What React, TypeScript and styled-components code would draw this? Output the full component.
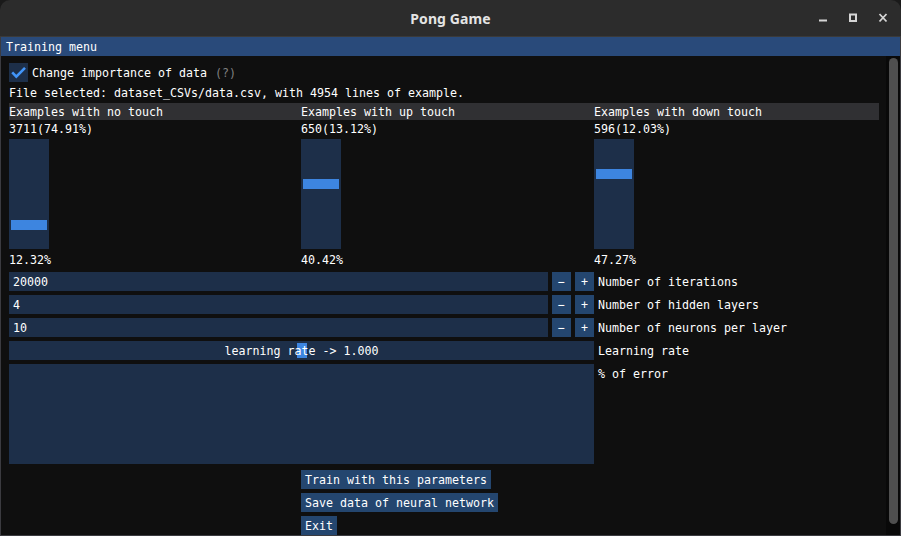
import React from 'react';
import styled, { createGlobalStyle } from 'styled-components';

const GlobalStyle = createGlobalStyle`
  html, body {
    margin: 0;
    padding: 0;
    background: #1a1a1a;
  }
  body {
    width: 901px;
    height: 536px;
    overflow: hidden;
  }
`;

const Frame = styled.div`
  width: 901px;
  height: 536px;
  display: flex;
  flex-direction: column;
  overflow: hidden;
  font-family: "DejaVu Sans Mono", "Liberation Mono", monospace;
  font-size: 11.63px;
  line-height: 15px;
  color: #ffffff;
`;

const TitleBar = styled.div`
  height: 36px;
  flex-shrink: 0;
  display: grid;
  grid-template-columns: 1fr auto 1fr;
  align-items: center;
  background: #2c2c2c;
  border-radius: 10px 10px 0 0;
  border-bottom: 1px solid #3a3a3a;
  line-height: normal;
`;

const Title = styled.div`
  grid-column: 2;
  font-family: "Noto Sans", "DejaVu Sans", sans-serif;
  font-weight: 700;
  font-size: 14px;
  color: #e4e4e4;
  letter-spacing: 0.1px;
`;

const Controls = styled.div`
  grid-column: 3;
  justify-self: end;
  display: flex;
  padding-right: 3px;
  height: 36px;
`;

const ControlButton = styled.div`
  width: 30px;
  height: 36px;
  display: flex;
  justify-content: center;
  padding-top: 13px;
  box-sizing: border-box;
`;

const Window = styled.div`
  flex: 1;
  display: flex;
  flex-direction: column;
  background: #0f0f0f;
  border: 1px solid #3b3b40;
  border-top: none;
  min-height: 0;
`;

const MenuBar = styled.div`
  height: 19px;
  flex-shrink: 0;
  background: #294a7a;
  padding: 3px 5px 0;
  box-sizing: border-box;
`;

const Body = styled.div`
  flex: 1;
  display: flex;
  min-height: 0;
`;

const Content = styled.div`
  flex: 1;
  display: flex;
  flex-direction: column;
  gap: 4px;
  padding: 7px 7px 0 8px;
`;

const ScrollTrack = styled.div`
  width: 14px;
  flex-shrink: 0;
  background: #090909;
  padding: 2px 2px 0 3px;
  box-sizing: border-box;
`;

const ScrollGrab = styled.div`
  width: 9px;
  height: 466px;
  border-radius: 5px;
  background: #4f4f4f;
`;

const CheckRow = styled.div`
  display: flex;
  align-items: flex-start;
  height: 19px;
`;

const CheckBox = styled.div`
  width: 19px;
  height: 19px;
  background: #1d2f49;
  margin-right: 4px;
`;

const CheckLabel = styled.span`
  padding-top: 3px;
  white-space: pre;
`;

const Hint = styled.span`
  color: #808080;
  margin-left: 8px;
`;

const Line = styled.div`
  height: 13px;
  white-space: pre;
`;

const Table = styled.div`
  width: 870px;
  display: flex;
  flex-direction: column;
`;

const TableHeader = styled.div`
  display: grid;
  grid-template-columns: 292px 293px 1fr;
  height: 17px;
  padding-top: 2px;
  box-sizing: border-box;
  background: #303033;
`;

const TableRow = styled.div`
  display: grid;
  grid-template-columns: 292px 293px 1fr;
  margin-top: 2px;
`;

const Cell = styled.div`
  display: flex;
  flex-direction: column;
  gap: 4px;
`;

const VSlider = styled.div`
  position: relative;
  width: 40px;
  height: 110px;
  background: #1d2f49;
`;

const VGrab = styled.div<{ $top: number }>`
  position: absolute;
  left: 2px;
  right: 2px;
  top: ${({ $top }) => $top}px;
  height: 10px;
  background: #3d85e0;
`;

const ParamRow = styled.div<{ $gap?: number }>`
  display: flex;
  align-items: flex-start;
  gap: 4px;
  margin-top: ${({ $gap }) => $gap ?? 0}px;
`;

const InputField = styled.div`
  width: 539px;
  height: 19px;
  padding: 3px 4px;
  box-sizing: border-box;
  background: #1d2f49;
`;

const StepButton = styled.div`
  width: 19px;
  height: 19px;
  padding-top: 3px;
  box-sizing: border-box;
  text-align: center;
  background: #24466f;
`;

const Label = styled.div`
  padding-top: 3px;
  white-space: pre;
`;

const HSlider = styled.div`
  position: relative;
  width: 585px;
  height: 19px;
  padding-top: 3px;
  box-sizing: border-box;
  background: #1d2f49;
  text-align: center;
`;

const HGrab = styled.div`
  position: absolute;
  top: 2px;
  bottom: 2px;
  width: 10px;
  background: #3d85e0;
`;

const SliderText = styled.span`
  position: relative;
`;

const Plot = styled.div`
  width: 585px;
  height: 100px;
  background: #1d2f49;
`;

const ButtonStack = styled.div`
  display: flex;
  flex-direction: column;
  align-items: flex-start;
  gap: 4px;
  padding-left: 292px;
  margin-top: 2px;
`;

const Button = styled.div`
  height: 19px;
  padding: 3px 4px 0;
  box-sizing: border-box;
  background: #24466f;
  white-space: pre;
`;

const columns = [
  { title: 'Examples with no touch', count: '3711(74.91%)', pct: '12.32%', top: 81 },
  { title: 'Examples with up touch', count: '650(13.12%)', pct: '40.42%', top: 40 },
  { title: 'Examples with down touch', count: '596(12.03%)', pct: '47.27%', top: 30 },
];

const params = [
  { value: '20000', label: 'Number of iterations' },
  { value: '4', label: 'Number of hidden layers' },
  { value: '10', label: 'Number of neurons per layer' },
];

const learningRate = 1.0;

const App = () => {
  const grabLeft = 2 + (585 - 4 - 10) * (learningRate / 2);

  return (
    <Frame>
      <GlobalStyle />
      <TitleBar>
        <Title>Pong Game</Title>
        <Controls>
          <ControlButton>
            <svg width="10" height="10" viewBox="0 0 10 10">
              <rect x="1" y="6.5" width="8" height="2" fill="#d6d6d6" />
            </svg>
          </ControlButton>
          <ControlButton>
            <svg width="10" height="10" viewBox="0 0 10 10">
              <rect x="2" y="1.5" width="6" height="6.5" fill="none" stroke="#d6d6d6" strokeWidth="2" />
            </svg>
          </ControlButton>
          <ControlButton>
            <svg width="10" height="10" viewBox="0 0 10 10">
              <path d="M1.5 1 L8.5 8.5 M8.5 1 L1.5 8.5" stroke="#d6d6d6" strokeWidth="1.8" />
            </svg>
          </ControlButton>
        </Controls>
      </TitleBar>
      <Window>
        <MenuBar>Training menu</MenuBar>
        <Body>
          <Content>
            <CheckRow>
              <CheckBox>
                <svg width="19" height="19" viewBox="0 0 19 19">
                  <polyline
                    points="3.2,9.4 7.3,13.6 16,4.9"
                    fill="none"
                    stroke="#4296fa"
                    strokeWidth="2.6"
                    strokeLinejoin="miter"
                  />
                </svg>
              </CheckBox>
              <CheckLabel>
                Change importance of data<Hint>(?)</Hint>
              </CheckLabel>
            </CheckRow>
            <Line>File selected: dataset_CSVs/data.csv, with 4954 lines of example.</Line>
            <Table>
              <TableHeader>
                {columns.map((c) => (
                  <div key={c.title}>{c.title}</div>
                ))}
              </TableHeader>
              <TableRow>
                {columns.map((c) => (
                  <Cell key={c.title}>
                    <Line>{c.count}</Line>
                    <VSlider>
                      <VGrab $top={c.top} />
                    </VSlider>
                    <Line>{c.pct}</Line>
                  </Cell>
                ))}
              </TableRow>
            </Table>
            {params.map((p, i) => (
              <ParamRow key={p.label} $gap={i === 0 ? 2 : 0}>
                <InputField>{p.value}</InputField>
                <StepButton>−</StepButton>
                <StepButton>+</StepButton>
                <Label>{p.label}</Label>
              </ParamRow>
            ))}
            <ParamRow>
              <HSlider>
                <HGrab style={{ left: grabLeft }} />
                <SliderText>learning rate -&gt; {learningRate.toFixed(3)}</SliderText>
              </HSlider>
              <Label>Learning rate</Label>
            </ParamRow>
            <ParamRow>
              <Plot />
              <Label>% of error</Label>
            </ParamRow>
            <ButtonStack>
              <Button>Train with this parameters</Button>
              <Button>Save data of neural network</Button>
              <Button>Exit</Button>
            </ButtonStack>
          </Content>
          <ScrollTrack>
            <ScrollGrab />
          </ScrollTrack>
        </Body>
      </Window>
    </Frame>
  );
};

export default App;
